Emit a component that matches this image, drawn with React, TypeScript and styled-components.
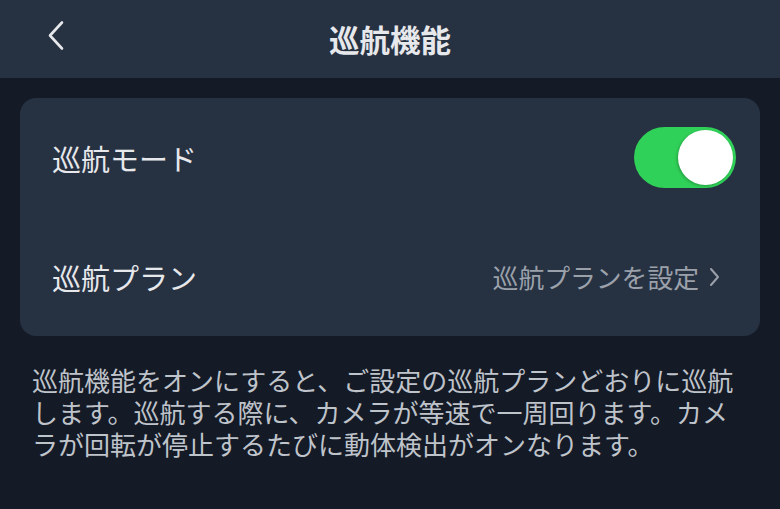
import styled, { createGlobalStyle } from 'styled-components';

const GlobalStyle = createGlobalStyle`
  body {
    margin: 0;
    background-color: #141a26;
    font-family: "Noto Sans CJK JP", "Noto Sans", sans-serif;
  }
`;

const Page = styled.div`
  width: 780px;
  height: 509px;
  background-color: #141a26;
`;

const Header = styled.header`
  position: relative;
  height: 78px;
  display: flex;
  justify-content: center;
  align-items: center;
  background-color: #263142;
`;

const BackButton = styled.button`
  position: absolute;
  left: 44px;
  top: 17px;
  width: 24px;
  height: 36px;
  padding: 0;
  border: none;
  background: none;
  display: flex;
  align-items: center;
  justify-content: center;
`;

const Title = styled.h1`
  margin: 0;
  font-size: 30.5px;
  font-weight: 700;
  color: #e6e8eb;
`;

const Card = styled.section`
  margin: 20px 20px 0;
  height: 238px;
  border-radius: 16px;
  background-color: #263142;
  display: flex;
  flex-direction: column;
`;

const Row = styled.div<{ $right: number }>`
  flex: 1;
  display: flex;
  align-items: center;
  justify-content: space-between;
  padding: 0 ${(props) => props.$right}px 0 32px;
`;

const Label = styled.span`
  font-size: 29px;
  color: #e6e8eb;
`;

const Toggle = styled.div`
  width: 102px;
  height: 61px;
  border-radius: 31px;
  background-color: #30d158;
  display: flex;
  align-items: center;
  justify-content: flex-end;
  padding: 0 3px;
  box-sizing: border-box;
`;

const Knob = styled.div`
  width: 55px;
  height: 55px;
  border-radius: 50%;
  background-color: #ffffff;
  box-shadow: -1px 1px 3px rgba(0, 0, 0, 0.25);
`;

const Link = styled.span`
  display: flex;
  align-items: center;
  gap: 10px;
  font-size: 25.8px;
  color: #9ba1aa;
`;

const Description = styled.p`
  margin: 28px 0 0;
  padding: 0 28px 0 32px;
  font-size: 26px;
  line-height: 32px;
  color: #bfc3ca;
`;

function App() {
  return (
    <Page>
      <GlobalStyle />
      <Header>
        <BackButton>
          <svg width="18" height="31" viewBox="0 0 18 31" fill="none">
            <path
              d="M15 2.5 L3 15.5 L15 28.5"
              stroke="#e6e8eb"
              strokeWidth="2.6"
              strokeLinecap="round"
              strokeLinejoin="round"
            />
          </svg>
        </BackButton>
        <Title>巡航機能</Title>
      </Header>
      <Card>
        <Row $right={24}>
          <Label>巡航モード</Label>
          <Toggle>
            <Knob />
          </Toggle>
        </Row>
        <Row $right={40}>
          <Label>巡航プラン</Label>
          <Link>
            巡航プランを設定
            <svg width="11" height="20" viewBox="0 0 11 20" fill="none">
              <path
                d="M2 2 L9 10 L2 18"
                stroke="#9ba1aa"
                strokeWidth="2"
                strokeLinecap="round"
                strokeLinejoin="round"
              />
            </svg>
          </Link>
        </Row>
      </Card>
      <Description>
        巡航機能をオンにすると、ご設定の巡航プランどおりに巡航します。巡航する際に、カメラが等速で一周回ります。カメラが回転が停止するたびに動体検出がオンなります。
      </Description>
    </Page>
  );
}

export default App;
